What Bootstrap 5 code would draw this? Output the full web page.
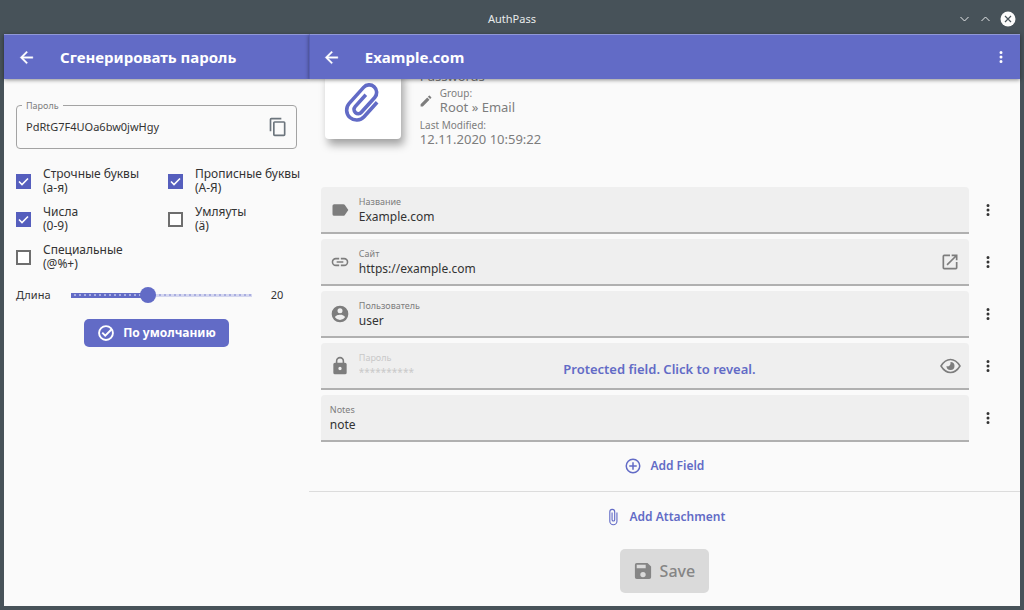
<!DOCTYPE html>
<html lang="ru">
<head>
<meta charset="utf-8">
<meta name="viewport" content="width=device-width, initial-scale=1">
<title>AuthPass</title>
<link href="https://cdn.jsdelivr.net/npm/bootstrap@5.3.0/dist/css/bootstrap.min.css" rel="stylesheet">
<style>
:root { --accent: #626bc6; --frame: #475259; --paper: #fafafa; --ink: #333; --soft: #7d7d7d; }
body { font-family: "Noto Sans", "Open Sans", sans-serif; font-size: 12px; line-height: 14px; color: var(--ink); background: var(--frame); }
button, input { font: inherit; color: inherit; }
svg { display: block; flex: none; fill: currentColor; }
.plain { border: 0; background: none; padding: 0; color: inherit; }
.titlebar { display: grid; grid-template-columns: 1fr auto 1fr; height: 34px; padding-top: 4px; color: #e8eaeb; font-size: 11px; }
.app-window { margin: 0 4px 4px; background: var(--paper); }
.side-pane { flex: 0 0 30%; min-width: 0; }
.main-pane { min-width: 0; }
.appbar { height: 45px; background: var(--accent); border-top: 1px solid #9097d6; color: #fff; box-shadow: 0 1px 4px rgba(0,0,0,.45); z-index: 2; padding-left: 13px; }
.appbar h1 { font-size: 15px; line-height: 20px; font-weight: 700; margin: 0; }
.main-pane .appbar { border-left: 1px solid #565eb6; padding-left: 12px; }
.side-body { padding: 26px 12px 0; }
.outlined { border: 1px solid #a3a3a3; border-radius: 4px; height: 44px; padding: 0 8px 0 9px; }
.outlined label { position: absolute; top: -6px; left: 5px; padding: 0 4px; background: var(--paper); font-size: 9px; line-height: 12px; color: var(--soft); }
.outlined input { font-size: 11px; }
.bare { border: 0; outline: 0; background: transparent; padding: 0; min-width: 0; }
.options { display: grid; grid-template-columns: repeat(2, 152px); row-gap: 10px; margin-top: 18px; }
.options label { white-space: nowrap; }
.options input { flex: none; appearance: none; width: 15px; height: 15px; margin: 0; border: 2px solid #6e6e6e; background: #fff; }
.options input:checked { border-color: #555ebd; background: #555ebd url("data:image/svg+xml,%3Csvg xmlns='http://www.w3.org/2000/svg' viewBox='0 0 11 11'%3E%3Cpath d='M1 5.5l3 3 6-6' fill='none' stroke='white' stroke-width='1.6'/%3E%3C/svg%3E"); }
.length-row { margin-top: 15px; font-size: 11px; }
.length-row label { width: 55px; }
.length-row output { width: 26px; margin-left: 19px; }
.length-row input { min-width: 0; appearance: none; height: 18px; margin: 0; background:
  repeating-linear-gradient(90deg, transparent 0 3px, #a9aee0 3px 5px) 0 50% / 100% 2px no-repeat,
  linear-gradient(var(--accent), var(--accent)) 0 50% / var(--fill) 5px no-repeat,
  linear-gradient(#d5d7ef, #d5d7ef) 0 50% / 100% 3px no-repeat; }
.length-row input::-webkit-slider-thumb { appearance: none; width: 16px; height: 16px; border-radius: 50%; background: var(--accent); }
.default-row { margin-top: 15px; }
.btn-accent { --bs-btn-color: #fff; --bs-btn-bg: var(--accent); --bs-btn-hover-color: #fff; --bs-btn-hover-bg: #555ebd; --bs-btn-padding-x: 13px; --bs-btn-padding-y: 5px; --bs-btn-font-size: 12px; --bs-btn-line-height: 18px; --bs-btn-font-weight: 700; --bs-btn-border-width: 0; --bs-btn-border-radius: 5px; }
.main-body { overflow: hidden; }
.summary { margin: -8px 0 0 16px; height: 116px; color: var(--soft); }
.entry-icon { width: 76px; height: 68px; padding-bottom: 5px; margin-right: 19px; background: #fff; border-radius: 4px; box-shadow: 3px 6px 8px rgba(0,0,0,.35); color: var(--accent); }
.summary dl, .summary dd { margin: 0; }
.summary dt { font-weight: 400; font-size: 10px; line-height: 13px; }
.summary dd { font-size: 13px; line-height: 14px; }
.summary .stat { margin-bottom: 4px; }
.summary .stat:first-child { margin-top: -2px; }
.summary .stat:last-child { margin-top: 5px; }
.field-list { padding: 0 13px 0 12px; gap: 5px; }
.filled { height: 47px; padding: 0 9px; background: #efefef; border-bottom: 2px solid #b0b0b0; border-radius: 4px 4px 0 0; color: var(--soft); }
.filled > svg { margin-right: 9px; }
.filled label { display: block; font-size: 9px; line-height: 13px; }
.filled input { display: block; width: 100%; height: 17px; font-size: 12px; color: var(--ink); }
.veiled label, .veiled input { color: #c9c9c9; }
.veiled input { font-size: 10px; }
.reveal { position: absolute; inset: 6px 9px 0 38px; font-size: 13px; }
.reveal, .text-action { color: var(--accent); font-weight: 600; }
.text-action { height: 24px; }
.more { width: 38px; height: 46px; color: #333; }
.section-line { margin: 0; border-top: 1px solid #dcdcdc; opacity: 1; }
.add-field { padding: 12px 0 13px; }
.form-end { padding: 13px 0 12px; gap: 20px; }
.save-btn { --bs-btn-disabled-color: #858585; --bs-btn-disabled-bg: #dadada; --bs-btn-disabled-opacity: 1; --bs-btn-border-width: 0; --bs-btn-padding-x: 14px; --bs-btn-padding-y: 12px; --bs-btn-font-size: 16px; --bs-btn-line-height: 20px; --bs-btn-font-weight: 500; --bs-btn-border-radius: 5px; }
</style>
</head>
<body class="d-flex flex-column min-vh-100">
<svg class="d-none">
  <symbol id="back" viewBox="0 0 24 24"><path d="M20 11H7.830l5.590-5.590L12 4l-8 8 8 8 1.410-1.410L7.830 13H20z" stroke="currentColor" stroke-width=".5"/></symbol>
  <symbol id="dots" viewBox="0 0 24 24"><path d="M12 8a2 2 0 1 0 0-4 2 2 0 0 0 0 4zm0 2a2 2 0 1 0 0 4 2 2 0 0 0 0-4zm0 6a2 2 0 1 0 0 4 2 2 0 0 0 0-4z"/></symbol>
  <symbol id="clip" viewBox="0 0 24 24"><path d="M16.500 6v11.500a4 4 0 0 1-8 0V5a2.500 2.500 0 0 1 5 0v10.500a1 1 0 0 1-2 0V6H10v9.500a2.500 2.500 0 0 0 5 0V5a4 4 0 0 0-8 0v12.500a5.500 5.500 0 0 0 11 0V6z"/></symbol>
</svg>

<header class="titlebar align-items-center">
  <span></span>
  <span>AuthPass</span>
  <span class="d-flex justify-content-end align-items-center gap-2 pe-2">
    <button class="plain" aria-label="Свернуть"><svg width="13" height="14" viewBox="0 0 13 14"><path d="M2.500 5l4 4 4-4" fill="none" stroke="currentColor"/></svg></button>
    <button class="plain" aria-label="Развернуть"><svg width="13" height="14" viewBox="0 0 13 14"><path d="M2.500 9l4-4 4 4" fill="none" stroke="currentColor"/></svg></button>
    <button class="plain" aria-label="Закрыть"><svg width="16" height="16" viewBox="0 0 16 16"><circle cx="8" cy="8" r="7.500" fill="#fcfcfc"/><path d="M5 5l6 6M11 5l-6 6" stroke="#475259" stroke-width="1.200"/></svg></button>
  </span>
</header>

<div class="app-window d-flex flex-grow-1">
  <aside class="side-pane d-flex flex-column">
    <div class="appbar d-flex align-items-center position-relative">
      <button class="plain" aria-label="Назад"><svg width="19" height="19"><use href="#back"/></svg></button>
      <h1 class="ps-4">Сгенерировать пароль</h1>
    </div>
    <form class="side-body">
      <div class="outlined d-flex align-items-center position-relative">
        <label for="generated">Пароль</label>
        <input id="generated" class="bare flex-grow-1" value="PdRtG7F4UOa6bw0jwHgy" readonly>
        <button type="button" class="plain text-secondary" aria-label="Копировать"><svg width="20" height="20" viewBox="0 0 24 24"><path d="M16 1H4a2 2 0 0 0-2 2v14h2V3h12V1zm3 4H8a2 2 0 0 0-2 2v14a2 2 0 0 0 2 2h11a2 2 0 0 0 2-2V7a2 2 0 0 0-2-2zm0 16H8V7h11v14z"/></svg></button>
      </div>
      <div class="options">
        <label class="d-flex align-items-center"><input type="checkbox" checked><span class="ps-2 ms-1">Строчные буквы<br>(а-я)</span></label>
        <label class="d-flex align-items-center"><input type="checkbox" checked><span class="ps-2 ms-1">Прописные буквы<br>(А-Я)</span></label>
        <label class="d-flex align-items-center"><input type="checkbox" checked><span class="ps-2 ms-1">Числа<br>(0-9)</span></label>
        <label class="d-flex align-items-center"><input type="checkbox"><span class="ps-2 ms-1">Умляуты<br>(ä)</span></label>
        <label class="d-flex align-items-center"><input type="checkbox"><span class="ps-2 ms-1">Специальные<br>(@%+)</span></label>
      </div>
      <div class="length-row d-flex align-items-center">
        <label for="len">Длина</label>
        <input id="len" class="flex-grow-1" style="--fill:42%" type="range" min="0" max="48" value="20">
        <output for="len">20</output>
      </div>
      <div class="default-row text-center">
        <button type="button" class="btn btn-accent d-inline-flex align-items-center gap-2"><svg width="18" height="18" viewBox="0 0 24 24"><path d="M12 1.500a10.500 10.500 0 1 0 0 21 10.500 10.500 0 0 0 0-21zm0 2.500a8 8 0 1 1 0 16 8 8 0 0 1 0-16z"/><path d="M7 11.500l4 4L19.500 7" fill="none" stroke="currentColor" stroke-width="2.500"/></svg>По умолчанию</button>
      </div>
    </form>
  </aside>

  <main class="main-pane flex-grow-1 d-flex flex-column">
    <div class="appbar d-flex align-items-center position-relative pe-2">
      <button class="plain" aria-label="Назад"><svg width="19" height="19"><use href="#back"/></svg></button>
      <h1 class="ps-4 flex-grow-1">Example.com</h1>
      <button class="plain" aria-label="Меню"><svg width="22" height="18"><use href="#dots"/></svg></button>
    </div>
    <div class="main-body flex-grow-1">
      <section class="summary d-flex">
        <div class="entry-icon d-flex align-items-center justify-content-center"><svg width="48" height="48" viewBox="-24 -24 48 48"><path d="M10-10V9.500A10 10 0 0 1-10 9.500V-12A7.500 7.500 0 0 1 5-12V8A4.200 4.200 0 0 1-3.400 8V-8" transform="rotate(42)" fill="none" stroke="currentColor" stroke-width="3.600"/></svg></div>
        <dl>
          <div class="stat"><dd>Passwords</dd></div>
          <div class="stat d-flex align-items-center">
            <svg class="me-2" width="12" height="12" viewBox="2 2 20 20"><path d="M3 17.250V21h3.750L17.810 9.940l-3.750-3.750L3 17.250zM20.710 7.040a1 1 0 0 0 0-1.410l-2.340-2.340a1 1 0 0 0-1.410 0l-1.830 1.830 3.750 3.750 1.830-1.830z"/></svg>
            <div><dt>Group:</dt><dd>Root » Email</dd></div>
          </div>
          <div class="stat"><dt>Last Modified:</dt><dd>12.11.2020 10:59:22</dd></div>
        </dl>
      </section>

      <form>
        <div class="field-list d-flex flex-column">
          <div class="d-flex">
            <div class="filled d-flex align-items-center flex-grow-1">
              <svg width="20" height="20" viewBox="0 0 24 24"><path d="M17.630 5.840A2 2 0 0 0 16 5H5a2 2 0 0 0-2 2v10a2 2 0 0 0 2 2h11a2 2 0 0 0 1.630-.84L22 12z"/></svg>
              <div class="flex-grow-1"><label for="f-name">Название</label><input id="f-name" class="bare" value="Example.com"></div>
            </div>
            <button type="button" class="plain more d-flex align-items-center justify-content-center" aria-label="Действия"><svg width="18" height="18"><use href="#dots"/></svg></button>
          </div>
          <div class="d-flex">
            <div class="filled d-flex align-items-center flex-grow-1">
              <svg width="20" height="20" viewBox="0 0 24 24"><path d="M3.900 12A3.100 3.100 0 0 1 7 8.900h4V7H7a5 5 0 0 0 0 10h4v-1.900H7A3.100 3.100 0 0 1 3.900 12zM8 13h8v-2H8v2zm9-6h-4v1.900h4a3.100 3.100 0 0 1 0 6.200h-4V17h4a5 5 0 0 0 0-10z"/></svg>
              <div class="flex-grow-1"><label for="f-site">Сайт</label><input id="f-site" class="bare" value="https://example.com"></div>
              <button type="button" class="plain" aria-label="Открыть сайт"><svg width="20" height="20" viewBox="0 0 24 24"><path d="M19 19H5V5h7V3H5a2 2 0 0 0-2 2v14a2 2 0 0 0 2 2h14a2 2 0 0 0 2-2v-7h-2v7zM14 3v2h3.590l-9.830 9.830 1.410 1.410L19 6.410V10h2V3h-7z"/></svg></button>
            </div>
            <button type="button" class="plain more d-flex align-items-center justify-content-center" aria-label="Действия"><svg width="18" height="18"><use href="#dots"/></svg></button>
          </div>
          <div class="d-flex">
            <div class="filled d-flex align-items-center flex-grow-1">
              <svg width="20" height="20" viewBox="0 0 24 24"><path fill-rule="evenodd" d="M12 2a10 10 0 1 0 0 20 10 10 0 0 0 0-20zm0 3a3 3 0 1 1 0 6 3 3 0 0 1 0-6zm0 14.200a7.200 7.200 0 0 1-6-3.220c.03-1.990 4-3.080 6-3.080s5.970 1.090 6 3.080a7.200 7.200 0 0 1-6 3.220z"/></svg>
              <div class="flex-grow-1"><label for="f-user">Пользователь</label><input id="f-user" class="bare" value="user"></div>
            </div>
            <button type="button" class="plain more d-flex align-items-center justify-content-center" aria-label="Действия"><svg width="18" height="18"><use href="#dots"/></svg></button>
          </div>
          <div class="d-flex">
            <div class="filled veiled d-flex align-items-center flex-grow-1 position-relative pe-2">
              <svg width="20" height="20" viewBox="0 0 24 24"><path fill-rule="evenodd" d="M18 8h-1V6A5 5 0 0 0 7 6v2H6a2 2 0 0 0-2 2v10a2 2 0 0 0 2 2h12a2 2 0 0 0 2-2V10a2 2 0 0 0-2-2zm-6 9a2 2 0 1 1 0-4 2 2 0 0 1 0 4zm3.100-9H8.900V6a3.100 3.100 0 0 1 6.200 0z"/></svg>
              <div class="flex-grow-1"><label for="f-pass">Пароль</label><input id="f-pass" class="bare" value="**********" readonly></div>
              <button type="button" class="plain reveal">Protected field. Click to reveal.</button>
              <button type="button" class="plain" aria-label="Показать пароль"><svg width="21" height="16" viewBox="0 0 21 16"><path d="M1 8Q5 1.500 10.500 1.500T20 8Q16 14.500 10.500 14.500T1 8z" fill="none" stroke="currentColor" stroke-width="1.500"/><path d="M10.500 4a4 4 0 1 1-4 4q2 1 3.200-.4T10.500 4z"/></svg></button>
            </div>
            <button type="button" class="plain more d-flex align-items-center justify-content-center" aria-label="Действия"><svg width="18" height="18"><use href="#dots"/></svg></button>
          </div>
          <div class="d-flex">
            <div class="filled d-flex align-items-center flex-grow-1">
              <div class="flex-grow-1"><label for="f-notes">Notes</label><input id="f-notes" class="bare" value="note"></div>
            </div>
            <button type="button" class="plain more d-flex align-items-center justify-content-center" aria-label="Действия"><svg width="18" height="18"><use href="#dots"/></svg></button>
          </div>
        </div>

        <div class="add-field d-flex justify-content-center">
          <button type="button" class="plain text-action d-flex align-items-center gap-2"><svg width="18" height="18" viewBox="0 0 24 24"><path d="M13 7h-2v4H7v2h4v4h2v-4h4v-2h-4V7zm-1-5a10 10 0 1 0 0 20 10 10 0 0 0 0-20zm0 18a8 8 0 1 1 0-16 8 8 0 0 1 0 16z"/></svg>Add Field</button>
        </div>
        <hr class="section-line">
        <div class="form-end d-flex flex-column align-items-center">
          <button type="button" class="plain text-action d-flex align-items-center gap-2"><svg width="18" height="18"><use href="#clip"/></svg>Add Attachment</button>
          <button type="submit" class="btn save-btn d-flex align-items-center gap-2" disabled><svg width="18" height="18" viewBox="2 2 20 20"><path fill-rule="evenodd" d="M17 3H5a2 2 0 0 0-2 2v14a2 2 0 0 0 2 2h14a2 2 0 0 0 2-2V7l-4-4zm-5 16a3 3 0 1 1 0-6 3 3 0 0 1 0 6zm3-10H5V5h10v4z"/></svg>Save</button>
        </div>
      </form>
    </div>
  </main>
</div>
<script src="https://cdn.jsdelivr.net/npm/bootstrap@5.3.0/dist/js/bootstrap.bundle.min.js"></script>
</body>
</html>
